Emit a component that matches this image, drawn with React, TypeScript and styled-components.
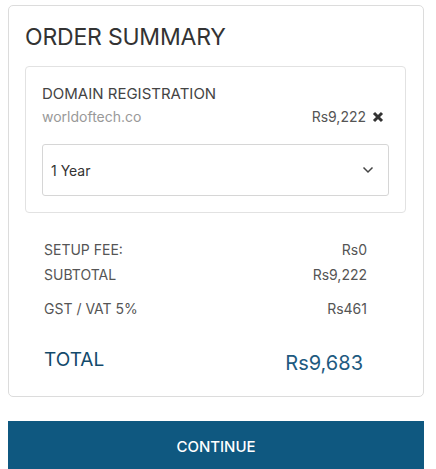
import React from 'react';
import styled, { createGlobalStyle } from 'styled-components';

const GlobalStyle = createGlobalStyle`
  body {
    margin: 0;
    background: #fff;
    font-family: Inter, "Noto Sans", sans-serif;
  }
`;

interface LineItem {
  label: string;
  value: string;
}

const lines: LineItem[] = [
  { label: 'SETUP FEE:', value: 'Rs0' },
  { label: 'SUBTOTAL', value: 'Rs9,222' },
  { label: 'GST / VAT 5%', value: 'Rs461' },
];

const App: React.FC = () => {
  return (
    <>
      <GlobalStyle />
      <Page>
        <Card>
          <Title>ORDER SUMMARY</Title>
          <ItemBox>
            <ItemName>DOMAIN REGISTRATION</ItemName>
            <ItemRow>
              <Domain>worldoftech.co</Domain>
              <Price>
                Rs9,222
                <RemoveIcon viewBox="0 0 12 12">
                  <path d="M2 2 L10 10 M10 2 L2 10" stroke="#333" strokeWidth="3" />
                </RemoveIcon>
              </Price>
            </ItemRow>
            <Select>
              <span>1 Year</span>
              <svg width="12" height="8" viewBox="0 0 12 8">
                <path d="M1.5 1.5 L6 6 L10.5 1.5" fill="none" stroke="#444" strokeWidth="1.5" />
              </svg>
            </Select>
          </ItemBox>
          <Summary>
            {lines.map((line, i) => (
              <SummaryRow key={line.label} $gap={i === 2 ? 9 : 0}>
                <span>{line.label}</span>
                <span>{line.value}</span>
              </SummaryRow>
            ))}
            <TotalRow>
              <TotalLabel>TOTAL</TotalLabel>
              <TotalValue>Rs9,683</TotalValue>
            </TotalRow>
          </Summary>
        </Card>
        <ContinueButton>CONTINUE</ContinueButton>
      </Page>
    </>
  );
};

export default App;

const Page = styled.div`
  padding: 5px 12px 0 8px;
  display: flex;
  flex-direction: column;
  gap: 24px;
`;

const Card = styled.div`
  border: 1px solid #dcdcdc;
  border-radius: 5px;
  padding: 17px 17px 21px 16px;
`;

const Title = styled.h2`
  margin: 0 0 15px;
  font-size: 23px;
  font-weight: 400;
  line-height: 28px;
  letter-spacing: -0.2px;
  color: #333;
`;

const ItemBox = styled.div`
  border: 1px solid #e2e2e2;
  border-radius: 4px;
  padding: 17px 16px 16px 16px;
`;

const ItemName = styled.div`
  font-size: 15px;
  line-height: 20px;
  color: #444;
`;

const ItemRow = styled.div`
  display: flex;
  justify-content: space-between;
  align-items: center;
  margin-top: 3px;
  padding-right: 5px;
  font-size: 14px;
  line-height: 20px;
`;

const Domain = styled.span`
  color: #999;
`;

const Price = styled.span`
  display: flex;
  align-items: center;
  gap: 6px;
  color: #555;
`;

const RemoveIcon = styled.svg`
  width: 12px;
  height: 12px;
`;

const Select = styled.div`
  margin-top: 17px;
  height: 50px;
  border: 1px solid #d6d6d6;
  border-radius: 3px;
  display: flex;
  align-items: center;
  justify-content: space-between;
  padding: 0 14px 0 8px;
  font-size: 14px;
  color: #333;
`;

const Summary = styled.div`
  padding: 27px 39px 0 19px;
`;

const SummaryRow = styled.div<{ $gap: number }>`
  display: flex;
  justify-content: space-between;
  font-size: 14px;
  line-height: 20px;
  color: #555;
  margin-top: ${(p) => p.$gap + 5}px;

  &:first-child {
    margin-top: 0;
  }
`;

const TotalRow = styled.div`
  display: flex;
  justify-content: space-between;
  align-items: flex-start;
  margin-top: 29px;
`;

const TotalLabel = styled.span`
  font-size: 19px;
  line-height: 24px;
  color: #134a6b;
`;

const TotalValue = styled.span`
  font-size: 20px;
  line-height: 24px;
  margin-top: 3px;
  margin-right: 4px;
  color: #1e5a80;
`;

const ContinueButton = styled.button`
  height: 50px;
  border: none;
  background: #0f5880;
  color: #fff;
  font-family: inherit;
  font-size: 15px;
  font-weight: 500;
  cursor: pointer;
`;
